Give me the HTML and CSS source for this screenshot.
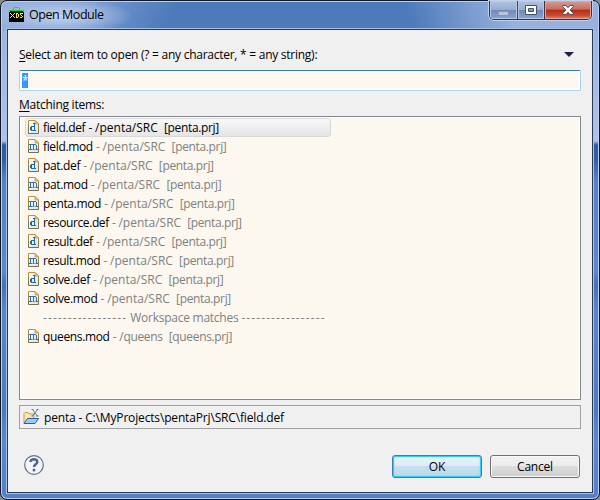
FILE: index.html
```html
<!DOCTYPE html>
<html lang="en">
<head>
<meta charset="utf-8">
<title>Open Module</title>
<link rel="stylesheet" href="styles.css">
</head>
<body>
<svg class="defs" width="0" height="0">
  <defs>
    <linearGradient id="page" x1="0" y1="0" x2="1" y2="1"><stop offset="0" stop-color="#fff"/><stop offset="1" stop-color="#d3e7f5"/></linearGradient>
    <linearGradient id="edge" x1="0" y1="0" x2="0" y2="1"><stop offset="0" stop-color="#c08f38"/><stop offset="1" stop-color="#77704d"/></linearGradient>
    <symbol id="file" viewBox="0 0 11 14">
      <path d="M.5 .5h6.500l3.500 3.500v9.500H.5z" fill="url(#page)" stroke="url(#edge)"/>
      <path d="M7 .5v3.500h3.500z" fill="#e8c47c" stroke="#c5973f" stroke-width=".7"/>
    </symbol>
    <symbol id="def" viewBox="0 0 11 14"><use href="#file" width="11" height="14"/><path d="M5 3h2v7h1v1H3v-1H2V7h1V6h3V4H5zM4 7v3h2V7z" fill="#2367a0" fill-rule="evenodd"/></symbol>
    <symbol id="mod" viewBox="0 0 11 14"><use href="#file" width="11" height="14"/><path d="M1 5h7v1h1v4h1v1H7.500v-1H8V6H6v4h.5v1H4.500v-1H5V6H3v4h1v1H1v-1h1V6H1z" fill="#2f6fa5"/></symbol>
  </defs>
</svg>
<div class="window">
  <header class="titlebar">
    <svg class="app" width="15" height="15" viewBox="0 0 15 15" shape-rendering="crispEdges">
      <path d="M0 3h15v12H0z" fill="#000"/>
      <path d="M4 1h1V0h5v1h1v2h4v2h-1V4H1v1H0V3h4zM5 1v2h5V1z" fill="#12e03a" fill-rule="evenodd"/>
      <path d="M1 6h1v1h1v1h1V7h1V6h1v1H5v1H4v1h1v1h1v1H5v-1H4V9H3v1H2v1H1v-1h1V9h1V8H2V7H1zM7 6h2v1H8v3h1v1H7zM9 7h1v3H9zM11 6h3v1h-2v1h1v1h1v1h-1v1h-2v-1h2V9h-1V8h-1z" fill="#f6f428"/>
    </svg>
    <h1 class="title">Open Module</h1>
    <div class="controls">
      <span class="ctl min"><svg width="11" height="5"><rect x=".5" y=".5" width="10" height="4" fill="#b9c5dc" stroke="#8493b4"/></svg></span>
      <span class="ctl max"><svg width="12" height="10"><path d="M.5.5h11v9H.5zM3.500 3.500v3h5v-3z" fill="#fff" fill-rule="evenodd" stroke="#47506a"/></svg></span>
      <span class="ctl close"><svg width="12" height="10" viewBox="0 0 12 10"><path d="M.7.5H4L6 2.700 8 .5h3.300v1L8.200 5l3.100 3.500v1H8L6 7.300 4 9.500H.7v-1L3.800 5 .7 1.500z" fill="#fff" stroke="#5b4a5c"/></svg></span>
    </div>
  </header>
  <main class="client">
    <div class="prompt"><span class="prompt-text"><u>S</u>elect an item to open (? = any character, * = any string):</span>
      <svg width="10" height="5" viewBox="0 0 10 5"><path d="M0 0h10L5 5z" fill="#2b1c46"/></svg></div>
    <div class="field"><div class="field-in"><span class="sel">*</span></div></div>
    <div class="match"><u>M</u>atching items:</div>
    <ul class="list">
      <li class="row on"><svg class="ico"><use href="#def"/></svg><span class="txt">field.def<i> - <b>/penta/SRC</b>&nbsp; [penta.prj]</i></span></li>
      <li class="row"><svg class="ico"><use href="#mod"/></svg><span class="txt">field.mod<i> - <b>/penta/SRC</b>&nbsp; [penta.prj]</i></span></li>
      <li class="row"><svg class="ico"><use href="#def"/></svg><span class="txt">pat.def<i> - <b>/penta/SRC</b>&nbsp; [penta.prj]</i></span></li>
      <li class="row"><svg class="ico"><use href="#mod"/></svg><span class="txt">pat.mod<i> - <b>/penta/SRC</b>&nbsp; [penta.prj]</i></span></li>
      <li class="row"><svg class="ico"><use href="#mod"/></svg><span class="txt">penta.mod<i> - <b>/penta/SRC</b>&nbsp; [penta.prj]</i></span></li>
      <li class="row"><svg class="ico"><use href="#def"/></svg><span class="txt tight">resource.def<i> - <b>/penta/SRC</b>&nbsp; [penta.prj]</i></span></li>
      <li class="row"><svg class="ico"><use href="#def"/></svg><span class="txt">result.def<i> - <b>/penta/SRC</b>&nbsp; [penta.prj]</i></span></li>
      <li class="row"><svg class="ico"><use href="#mod"/></svg><span class="txt">result.mod<i> - <b>/penta/SRC</b>&nbsp; [penta.prj]</i></span></li>
      <li class="row"><svg class="ico"><use href="#def"/></svg><span class="txt">solve.def<i> - <b>/penta/SRC</b>&nbsp; [penta.prj]</i></span></li>
      <li class="row"><svg class="ico"><use href="#mod"/></svg><span class="txt">solve.mod<i> - <b>/penta/SRC</b>&nbsp; [penta.prj]</i></span></li>
      <li class="row sep"><span class="dash">-----------------</span><span class="mid">Workspace matches</span><span class="dash">-----------------</span></li>
      <li class="row"><svg class="ico"><use href="#mod"/></svg><span class="txt">queens.mod<i> - /queens&nbsp; [queens.prj]</i></span></li>
    </ul>
    <div class="status">
      <svg width="16" height="16" viewBox="0 0 16 16">
        <path d="M1 14V4.500l1-1h3l1 1.500h5v4" fill="#fae7ad" stroke="#c99b3b"/>
        <path d="M1 14.500l3.500-5h11l-3.500 5z" fill="#9fcaf5" stroke="#2d5cb0"/>
        <path d="M8.500.5h2M13.500.5h2M8.500 7h2M13 7h2.500M9.500.5l5 6.500M14.500.5l-5 6.500" fill="none" stroke="#4e7fa6"/>
      </svg>
      <span class="path">penta - C:\MyProjects\pentaPrj\SRC\field.def</span>
    </div>
    <footer class="foot">
      <svg class="help" width="20" height="20" viewBox="0 0 20 20"><circle cx="10" cy="10" r="9.300" fill="#f5f6f9" stroke="#60718f" stroke-width="1.200"/><path d="M6.500 7C6.500 3.200 13.300 3.300 13.300 7c0 2.300-3.300 2.300-3.300 5" fill="none" stroke="#52668c" stroke-width="2.500"/><circle cx="10" cy="14.900" r="1.500" fill="#52668c"/></svg>
      <button class="btn ok">OK</button>
      <button class="btn">Cancel</button>
    </footer>
  </main>
</div>
</body>
</html>
```

FILE: styles.css
```css
* { box-sizing: border-box; }
body { margin: 0; width: 600px; height: 500px; overflow: hidden; background: #8b8d8b; font: 12px/19px "Open Sans", "Noto Sans", sans-serif; letter-spacing: -.35px; color: #000; }
.defs { position: absolute; }
.window {
  width: 600px; height: 500px; padding: 0 6px 6px; display: flex; flex-direction: column;
  border: 1px solid #101728; border-radius: 7px;
  box-shadow: inset 0 0 0 1px #b9d0ef;
  background: radial-gradient(ellipse 70px 18px at 62px 15px, #c3d3ee 0, #b4c8ea99 55%, transparent) 0 0 / 100% 30px no-repeat,
    linear-gradient(115deg, #9db4dc 0, #7f9fd4 12%, transparent 29%) 0 0 / 100% 30px no-repeat,
    linear-gradient(75deg, transparent 68%, #97b1dc 85%) 0 0 / 100% 30px no-repeat,
    linear-gradient(#4d7aba 0 29px, #9db5dc 29px, #adc2e5 140px, #2f5d9e 144px, #345f9f 158px, #5682c4 180px, #5c87c9 270px, #4772b0 285px, #5a85c8 310px, #4e79b9 410px, #5c88cb 440px, #547fc2);
}
.titlebar { height: 28px; display: flex; align-items: flex-start; padding-left: 2px; }
.app { margin-top: 6px; }
.title { flex: 1; margin: 3px 0 0 5px; font-size: 12.500px; font-weight: 400; line-height: 21px; letter-spacing: -.45px; }
.controls { display: flex; height: 19px; margin-right: 1px; border: 1px solid #283654; border-top: 0; border-radius: 0 0 5px 5px; box-shadow: 0 0 0 1px #bfd1ee; overflow: hidden; }
.ctl { display: flex; align-items: center; justify-content: center; box-shadow: inset 0 0 0 1px #b8c9e5; background: linear-gradient(#b3c3df, #98acd0 48%, #6f88b7 50%, #8ba5d2); }
.ctl svg { display: block; }
.min { width: 27px; padding-top: 6px; }
.max { width: 27px; border-left: 1px solid #35466a; }
.close { width: 47px; border-left: 1px solid #4b2935; box-shadow: inset 0 0 0 1px #dfa69f; background: linear-gradient(#d99a90, #c66e5f 46%, #b12d17 50%, #c84b34 80%, #df8a70); }
.client { flex: 1; border: 1px solid #25375b; outline: 1px solid #a9c3e8; background: #f0f0f0; padding: 15px 11px 0; display: flex; flex-direction: column; }
.prompt { height: 19px; letter-spacing: -.26px; display: flex; align-items: center; justify-content: space-between; padding-right: 7px; white-space: pre; }
u { text-underline-offset: 2px; text-decoration-thickness: 1px; }
.field { height: 21px; margin-top: 6px; border: 1px solid #abd3ed; border-top-color: #3d7bad; border-radius: 2px; background: #fff; padding: 2px; }
.field-in { height: 15px; background: #fcf8f1; }
.sel { display: block; width: 6px; height: 15px; line-height: 16px; background: #3399ff; color: #fff; border-right: 1px solid #c66b20; }
.match { height: 19px; margin-top: 4px; letter-spacing: -.25px; }
.list { list-style: none; margin: 2px 0 0; padding: 1px 4px; height: 284px; border: 1px solid #828790; background: #fcf8f0; box-shadow: inset 0 0 0 1px #fff; }
.row { height: 19px; display: flex; align-items: center; padding-left: 4px; white-space: pre; }
.row i { font-style: normal; color: #808080; }
.row b { font-weight: 400; letter-spacing: 0; }
.txt { word-spacing: .35px; }
.tight { letter-spacing: -.4px; }
.on { width: 306px; border: 1px solid #d9d9d9; border-radius: 3px; background: linear-gradient(#f8f8f8, #e5e5e5); padding-left: 2px; margin-left: 1px; }
.on .txt i { color: #000; }
.ico { width: 11px; height: 14px; margin: 0 4px 1px 0; }
.sep { color: #808080; padding-left: 19px; gap: 3px; }
.mid { letter-spacing: -.25px; }
.dash { letter-spacing: 1.090px; }
.status { height: 24px; margin-top: 5px; border: 1px solid #a0a0a0; display: flex; align-items: center; padding-left: 3px; gap: 5px; }
.path { letter-spacing: -.16px; }
.foot { display: flex; margin-top: 26px; align-items: flex-start; padding: 0 1px 0 5px; height: 23px; gap: 8px; }
.help { margin-right: auto; }
.btn { width: 90px; height: 23px; padding: 0; border: 1px solid #707070; border-radius: 3px; font: inherit; letter-spacing: -.2px; line-height: 20px; color: #000; background: linear-gradient(#f2f2f2, #ebebeb 49%, #dddddd 50%, #cfcfcf); box-shadow: inset 0 0 0 1px #fafafa; }
.ok { border-color: #3c7fb1; box-shadow: inset 0 0 0 1px #36c9f5, inset 0 0 2px 1px #71dcfa; background: linear-gradient(#eaf4fa, #dcebf4 49%, #c7dfed 50%, #bbd8e9); }
```
